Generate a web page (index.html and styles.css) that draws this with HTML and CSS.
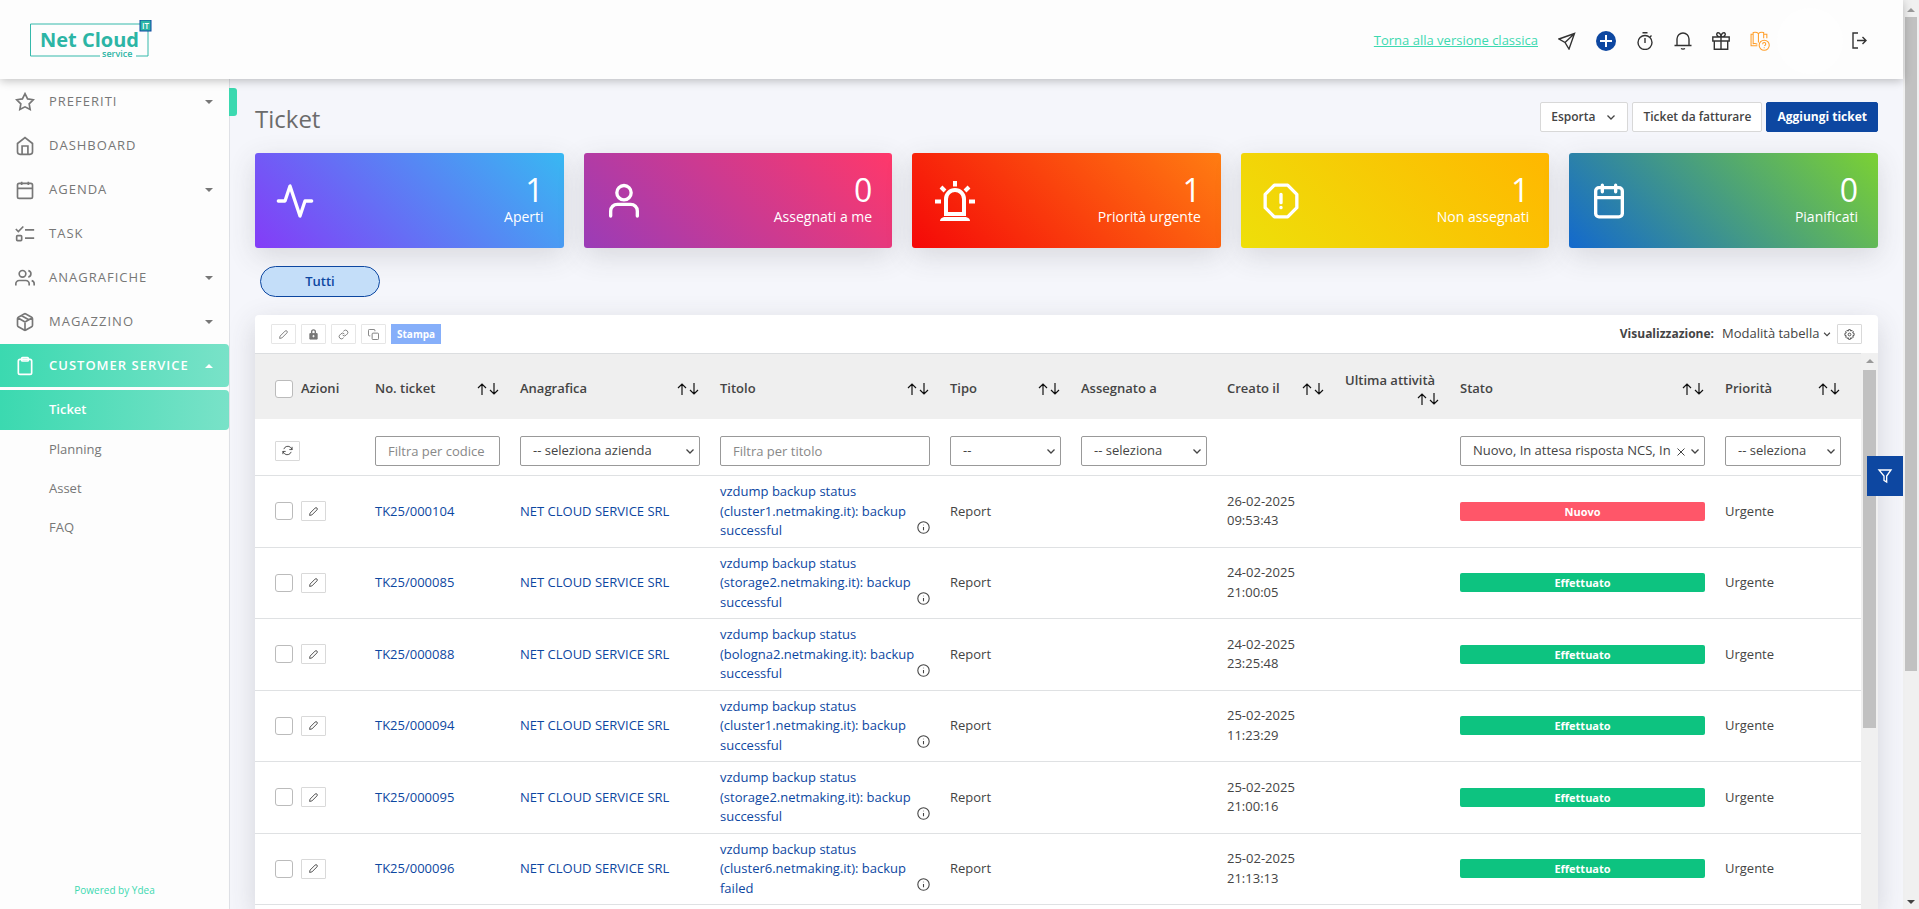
FILE: index.html
```
<!DOCTYPE html>
<html lang="it">
<head>
<meta charset="utf-8">
<title>Ticket</title>
<link rel="stylesheet" href="styles.css">
</head>
<body>
<svg class="sprite" aria-hidden="true">
  <symbol id="i-edit" viewBox="0 0 24 24"><path d="M15.500 4.500a2.500 2.500 0 0 1 4 4L8.500 19.500 3.500 20.500l1-5z"/></symbol>
  <symbol id="i-sort" viewBox="0 0 24 16"><path d="M6 14V3M2 7l4-4 4 4M18 2v11M14 9l4 4 4-4"/></symbol>
  <symbol id="i-info" viewBox="0 0 24 24"><circle cx="12" cy="12" r="10.500"/><path d="M12 11v6M12 7v1"/></symbol>
  <symbol id="i-down" viewBox="0 0 12 12"><path d="M2.500 4.500L6 8l3.500-3.500"/></symbol>
</svg>
<div class="shell">
  <header class="topbar">
    <a class="logo" href="#" aria-label="Net Cloud service IT">
      <svg width="122" height="40" viewBox="0 0 122 40">
        <path d="M110 4H.500v32H70M106 36h12V11" fill="none" stroke="#35b9ab"/>
        <rect x="110" y="0" width="11" height="11" fill="#2cb5a5"/>
        <text class="logo-it" x="112" y="9">IT</text>
        <text class="logo-name" x="10" y="27">Net Cloud</text>
        <text class="logo-sub" x="72" y="37">service</text>
      </svg>
    </a>
    <nav class="tools">
      <a class="classic" href="#">Torna alla versione classica</a>
      <button aria-label="Invia"><svg viewBox="0 0 18 18"><path d="M16.500 1.500L1 7l6 3.500L11 17zM16.500 1.500L7 10.500"/></svg></button>
      <button aria-label="Aggiungi"><svg class="plus" viewBox="0 0 20 20"><circle cx="10" cy="10" r="10" fill="#0d47a1" stroke="none"/><path d="M10 4v12M4 10h12" stroke="#fff" stroke-width="2"/></svg></button>
      <button aria-label="Timer"><svg viewBox="0 0 18 18"><circle cx="9" cy="10.500" r="7"/><path d="M6.500.800h5M9 6v5M14 5l1.500-1.500"/></svg></button>
      <button aria-label="Notifiche"><svg viewBox="0 0 18 18"><path d="M.500 13.500h17M3 13.500V7a6 6 0 0 1 12 0v6.500M7 16.500q2 1.200 4 0"/></svg></button>
      <button aria-label="Novità"><svg viewBox="0 0 18 18"><path d="M.800 5h16.400v4H.800zM2.300 9h13.400v8.200H2.300zM9 5v12M9 5C4 5 4 1 6 .800S9 3 9 5c0-2 1-4.400 3-4.200S14 5 9 5"/></svg></button>
      <button class="guide" aria-label="Guida"><svg viewBox="0 0 19 19"><path d="M7 12.500C5 11.500 4.500 12 3 12V1.500c2-.5 3.500-.5 5 1 1.500-1.500 3-1.500 5-1V7M8 2.500V11M3 3H1v11h6M13 3h3v4"/><circle cx="13.500" cy="13.500" r="4.800"/><path d="M12 12.500q0-1.500 1.500-1.500t1.500 1.400-1.500 1.600M13.500 15.500v1"/></svg></button>
      <span class="avatar"></span>
      <button aria-label="Esci"><svg viewBox="0 0 18 18"><path d="M8 1H3v15h5M7 8.500h9M12.500 5L16 8.500 12.500 12"/></svg></button>
    </nav>
  </header>

  <div class="body">
    <aside class="side">
      <nav class="menu">
        <a class="item" href="#"><svg viewBox="0 0 24 24"><path d="M12 2l3.100 6.300 6.900 1-5 4.900 1.200 6.800-6.200-3.200L5.800 21 7 14.200 2 9.300l6.900-1z"/></svg>PREFERITI<i class="caret"></i></a>
        <a class="item" href="#"><svg viewBox="0 0 24 24"><path d="M3 9l9-7 9 7v10a3 3 0 0 1-3 3H6a3 3 0 0 1-3-3zM8.500 22V12h7v10"/></svg>DASHBOARD</a>
        <a class="item" href="#"><svg viewBox="0 0 24 24"><rect x="3" y="4" width="18" height="18" rx="2"/><path d="M16 2v4M8 2v4M3 10h18"/></svg>AGENDA<i class="caret"></i></a>
        <a class="item" href="#"><svg viewBox="0 0 24 24"><path d="M12 7h11M12 17h11M1 6l3 3 6-6"/><rect x="2" y="14" width="6" height="6" rx="1"/></svg>TASK</a>
        <a class="item" href="#"><svg viewBox="0 0 24 24"><path d="M17 21v-2a4 4 0 0 0-4-4H5a4 4 0 0 0-4 4v2M23 21v-2a4 4 0 0 0-3-3.900M16 3.100a4 4 0 0 1 0 7.800"/><circle cx="9" cy="7" r="4"/></svg>ANAGRAFICHE<i class="caret"></i></a>
        <a class="item" href="#"><svg viewBox="0 0 24 24"><path d="M21 16V8a2 2 0 0 0-1-1.700l-7-4a2 2 0 0 0-2 0l-7 4A2 2 0 0 0 3 8v8a2 2 0 0 0 1 1.700l7 4a2 2 0 0 0 2 0l7-4a2 2 0 0 0 1-1.700zM3.300 7l8.700 5 8.700-5M12 22V12M7.500 4.200l9 5.200"/></svg>MAGAZZINO<i class="caret"></i></a>
        <a class="item on" href="#"><svg viewBox="0 0 24 24"><rect x="4" y="4" width="16" height="18" rx="2"/><rect x="8" y="2" width="8" height="4" rx="1"/></svg>CUSTOMER SERVICE<i class="caret up"></i></a>
      </nav>
      <nav class="submenu">
        <a class="sub on" href="#">Ticket</a>
        <a class="sub" href="#">Planning</a>
        <a class="sub" href="#">Asset</a>
        <a class="sub" href="#">FAQ</a>
      </nav>
      <a class="powered" href="#">Powered by Ydea</a>
      <button class="side-tab" aria-label="Riduci menu"></button>
    </aside>

    <main class="main">
      <div class="title-row">
        <h1>Ticket</h1>
        <button class="btn">Esporta <svg class="chev"><use href="#i-down"/></svg></button>
        <button class="btn">Ticket da fatturare</button>
        <button class="btn primary">Aggiungi ticket</button>
      </div>

      <section class="cards">
        <a class="card c1" href="#"><svg viewBox="0 0 24 24"><path d="M22 12h-4l-3 9L9 3l-3 9H2"/></svg><span><strong>1</strong>Aperti</span></a>
        <a class="card c2" href="#"><svg viewBox="0 0 24 24"><path d="M20 21v-3a4 4 0 0 0-4-4H8a4 4 0 0 0-4 4v3"/><circle cx="12" cy="7" r="4.300"/></svg><span><strong>0</strong>Assegnati a me</span></a>
        <a class="card c3" href="#"><svg class="siren" viewBox="0 0 40 40"><path d="M11 33V18a9 9 0 0 1 18 0V33z"/><path d="M0 20.500h6M34 20.500h6M20 0v5.500M6 6l4 4M34 6l-4 4"/><path class="fill" d="M9 36h22q4 1 4 4H5q0-3 4-4z"/></svg><span><strong>1</strong>Priorità urgente</span></a>
        <a class="card c4" href="#"><svg viewBox="0 0 24 24"><path d="M8 2.500h8L21.500 8v8L16 21.500H8L2.500 16V8zM12 8v5M12 15.800v.2"/></svg><span><strong>1</strong>Non assegnati</span></a>
        <a class="card c5" href="#"><svg viewBox="0 0 24 24"><rect x="4" y="4" width="16" height="17.500" rx="2"/><path d="M16 2.500v4M8 2.500v4M4 10h16"/></svg><span><strong>0</strong>Pianificati</span></a>
      </section>

      <div class="filters"><button class="pill">Tutti</button></div>

      <section class="panel">
        <div class="toolbar">
          <button class="mini dim" aria-label="Modifica"><svg><use href="#i-edit"/></svg></button>
          <button class="mini dim" aria-label="Blocca"><svg viewBox="0 0 24 24"><path d="M4 10h16v12H4z" fill="currentColor"/><path d="M8 10V6a4 4 0 0 1 8 0v4" stroke-width="3"/><circle cx="12" cy="15.500" r="1.500" fill="#fff" stroke="#fff"/></svg></button>
          <button class="mini dim" aria-label="Collega"><svg viewBox="0 0 24 24"><path d="M10 13a5 5 0 0 0 7.500.5l3-3a5 5 0 0 0-7-7L11.700 5M14 11a5 5 0 0 0-7.500-.5l-3 3a5 5 0 0 0 7 7l1.800-1.700"/></svg></button>
          <button class="mini dim" aria-label="Copia"><svg viewBox="0 0 24 24"><rect x="9" y="9" width="14" height="14" rx="2"/><path d="M5 15H3a2 2 0 0 1-2-2V3a2 2 0 0 1 2-2h10a2 2 0 0 1 2 2v2"/></svg></button>
          <button class="print">Stampa</button>
          <label class="view-label" for="view">Visualizzazione:</label>
          <span class="view"><select id="view"><option>Modalità tabella</option></select><svg class="chev"><use href="#i-down"/></svg></span>
          <button class="mini" aria-label="Impostazioni"><svg viewBox="0 0 24 24"><circle cx="12" cy="12" r="3"/><path d="M10 1.500h4l.8 3 2.700-1.500 2.900 2.900-1.500 2.700 3.100.9v4.500l-3.100.9 1.500 2.700-2.900 2.900-2.700-1.500-.8 3.500h-4l-.8-3.500L6.500 20.500l-2.900-2.900 1.500-2.700-3.100-.9V9.500l3.100-.9-1.500-2.700L6.500 3l2.700 1.500z"/></svg></button>
        </div>
        <div class="grid-wrap">
          <table class="grid">
            <colgroup><col class="w-act"><col class="w-num"><col class="w-ana"><col class="w-tit"><col class="w-tipo"><col class="w-ass"><col class="w-cre"><col class="w-ult"><col class="w-sta"><col class="w-pri"></colgroup>
            <thead>
              <tr class="head">
                <th><div class="acts"><input type="checkbox" aria-label="Seleziona tutti"> Azioni</div></th>
                <th><div class="th">No. ticket <svg><use href="#i-sort"/></svg></div></th>
                <th><div class="th">Anagrafica <svg><use href="#i-sort"/></svg></div></th>
                <th><div class="th">Titolo <svg><use href="#i-sort"/></svg></div></th>
                <th><div class="th">Tipo <svg><use href="#i-sort"/></svg></div></th>
                <th><div class="th">Assegnato a</div></th>
                <th><div class="th">Creato il <svg><use href="#i-sort"/></svg></div></th>
                <th><div class="th stack">Ultima attività <svg><use href="#i-sort"/></svg></div></th>
                <th><div class="th">Stato <svg><use href="#i-sort"/></svg></div></th>
                <th><div class="th">Priorità <svg><use href="#i-sort"/></svg></div></th>
              </tr>
              <tr class="search">
                <td><div class="acts"><button class="mini" aria-label="Ricarica"><svg viewBox="0 0 24 24"><path d="M22 4v6h-6M2 20v-6h6M4 9a9 9 0 0 1 15-3.500L22.500 10M1.500 14L5 18.500A9 9 0 0 0 20 15"/></svg></button></div></td>
                <td><input class="field" type="text" placeholder="Filtra per codice" aria-label="No. ticket"></td>
                <td><span class="pick"><select class="field" aria-label="Anagrafica"><option>-- seleziona azienda</option></select><svg class="chev"><use href="#i-down"/></svg></span></td>
                <td><input class="field" type="text" placeholder="Filtra per titolo" aria-label="Titolo"></td>
                <td><span class="pick"><select class="field" aria-label="Tipo"><option>--</option></select><svg class="chev"><use href="#i-down"/></svg></span></td>
                <td><span class="pick"><select class="field" aria-label="Assegnato a"><option>-- seleziona</option></select><svg class="chev"><use href="#i-down"/></svg></span></td>
                <td></td>
                <td></td>
                <td><span class="pick multi"><select class="field" aria-label="Stato"><option>Nuovo, In attesa risposta NCS, In</option></select><svg class="clear" viewBox="0 0 12 12"><path d="M2.500 2.500l7 7M9.500 2.500l-7 7"/></svg><svg class="chev"><use href="#i-down"/></svg></span></td>
                <td><span class="pick"><select class="field" aria-label="Priorità"><option>-- seleziona</option></select><svg class="chev"><use href="#i-down"/></svg></span></td>
              </tr>
            </thead>
            <tbody>
              <tr>
                <td><div class="acts"><input type="checkbox" aria-label="Seleziona TK25/000104"><button class="mini" aria-label="Modifica"><svg><use href="#i-edit"/></svg></button></div></td>
                <td><a href="#">TK25/000104</a></td><td><a href="#">NET CLOUD SERVICE SRL</a></td>
                <td><div class="subject"><a href="#">vzdump backup status (cluster1.netmaking.it): backup successful</a><svg><use href="#i-info"/></svg></div></td>
                <td>Report</td><td></td><td>26-02-2025 09:53:43</td><td></td>
                <td><span class="badge new">Nuovo</span></td><td>Urgente</td>
              </tr>
              <tr>
                <td><div class="acts"><input type="checkbox" aria-label="Seleziona TK25/000085"><button class="mini" aria-label="Modifica"><svg><use href="#i-edit"/></svg></button></div></td>
                <td><a href="#">TK25/000085</a></td><td><a href="#">NET CLOUD SERVICE SRL</a></td>
                <td><div class="subject"><a href="#">vzdump backup status (storage2.netmaking.it): backup successful</a><svg><use href="#i-info"/></svg></div></td>
                <td>Report</td><td></td><td>24-02-2025 21:00:05</td><td></td>
                <td><span class="badge">Effettuato</span></td><td>Urgente</td>
              </tr>
              <tr>
                <td><div class="acts"><input type="checkbox" aria-label="Seleziona TK25/000088"><button class="mini" aria-label="Modifica"><svg><use href="#i-edit"/></svg></button></div></td>
                <td><a href="#">TK25/000088</a></td><td><a href="#">NET CLOUD SERVICE SRL</a></td>
                <td><div class="subject"><a href="#">vzdump backup status (bologna2.netmaking.it): backup successful</a><svg><use href="#i-info"/></svg></div></td>
                <td>Report</td><td></td><td>24-02-2025 23:25:48</td><td></td>
                <td><span class="badge">Effettuato</span></td><td>Urgente</td>
              </tr>
              <tr>
                <td><div class="acts"><input type="checkbox" aria-label="Seleziona TK25/000094"><button class="mini" aria-label="Modifica"><svg><use href="#i-edit"/></svg></button></div></td>
                <td><a href="#">TK25/000094</a></td><td><a href="#">NET CLOUD SERVICE SRL</a></td>
                <td><div class="subject"><a href="#">vzdump backup status (cluster1.netmaking.it): backup successful</a><svg><use href="#i-info"/></svg></div></td>
                <td>Report</td><td></td><td>25-02-2025 11:23:29</td><td></td>
                <td><span class="badge">Effettuato</span></td><td>Urgente</td>
              </tr>
              <tr>
                <td><div class="acts"><input type="checkbox" aria-label="Seleziona TK25/000095"><button class="mini" aria-label="Modifica"><svg><use href="#i-edit"/></svg></button></div></td>
                <td><a href="#">TK25/000095</a></td><td><a href="#">NET CLOUD SERVICE SRL</a></td>
                <td><div class="subject"><a href="#">vzdump backup status (storage2.netmaking.it): backup successful</a><svg><use href="#i-info"/></svg></div></td>
                <td>Report</td><td></td><td>25-02-2025 21:00:16</td><td></td>
                <td><span class="badge">Effettuato</span></td><td>Urgente</td>
              </tr>
              <tr>
                <td><div class="acts"><input type="checkbox" aria-label="Seleziona TK25/000096"><button class="mini" aria-label="Modifica"><svg><use href="#i-edit"/></svg></button></div></td>
                <td><a href="#">TK25/000096</a></td><td><a href="#">NET CLOUD SERVICE SRL</a></td>
                <td><div class="subject"><a href="#">vzdump backup status (cluster6.netmaking.it): backup failed</a><svg><use href="#i-info"/></svg></div></td>
                <td>Report</td><td></td><td>25-02-2025 21:13:13</td><td></td>
                <td><span class="badge">Effettuato</span></td><td>Urgente</td>
              </tr>
            </tbody>
          </table>
          <div class="bar inner"><i class="arrow up"></i><span class="thumb"></span></div>
        </div>
      </section>
      <button class="funnel" aria-label="Filtri"><svg viewBox="0 0 24 24"><path d="M3 3h18L14.500 12v9l-4-2.500V12z"/></svg></button>
    </main>
  </div>
</div>
<div class="bar outer"><i class="arrow up"></i><span class="thumb"></span><i class="arrow down"></i></div>
</body>
</html>
```
FILE: styles.css
```
* { box-sizing: border-box; }

body {
  margin: 0;
  display: flex;
  height: 100vh;
  overflow: hidden;
  font: 13px/1.5 "Open Sans", "Noto Sans", sans-serif;
  color: #444;
  background: #f5f6fb;
}

.sprite { position: absolute; width: 0; height: 0; }

svg { fill: none; stroke: currentColor; stroke-width: 2; flex: none; }
a { color: #0d47a1; text-decoration: none; }
button, input, select { font: inherit; color: inherit; }
button { margin: 0; padding: 0; border: 0; background: none; }

.shell { flex: 1; min-width: 0; display: flex; flex-direction: column; }

/* Top bar */
.topbar {
  position: relative;
  z-index: 2;
  display: flex;
  align-items: center;
  justify-content: space-between;
  height: 79px;
  flex: none;
  padding: 0 35px 0 30px;
  background: #fdfdfd;
  box-shadow: 0 2px 9px rgba(0, 0, 0, .24);
}
.logo svg { display: block; stroke-width: 1; }
.logo text { stroke: none; fill: #2cb5a5; }
.logo .logo-name { font: 700 20px "Open Sans", sans-serif; }
.logo .logo-sub { font: 600 9px "Open Sans", sans-serif; }
.logo .logo-it { font: 600 8px "Open Sans", sans-serif; fill: #fff; }
.tools { display: flex; align-items: center; gap: 20px; color: #333; padding-top: 3px; }
.tools svg { display: block; width: 18px; height: 18px; stroke-width: 1.4; }
.tools .plus { width: 20px; height: 20px; }
.tools .guide { color: #ff9f2b; }
.tools .guide svg { width: 20px; height: 20px; stroke-width: 1; }
.classic { color: #3cd9b0; text-decoration: underline; }
.avatar { width: 66px; height: 66px; margin: 0 -13px; border-radius: 50%; background: #fefefe; }

.body { flex: 1; min-height: 0; display: flex; }

/* Sidebar */
.side {
  position: relative;
  display: flex;
  flex-direction: column;
  width: 230px;
  flex: none;
  padding-top: 1px;
  background: #fdfdfd;
  border-right: 1px solid #dfe1e6;
}
.item {
  display: flex;
  align-items: center;
  height: 43px;
  margin-bottom: 1px;
  padding: 0 16px 0 15px;
  color: #777;
  letter-spacing: 1px;
}
.item svg { width: 20px; height: 20px; margin-right: 14px; }
.item.on, .sub.on {
  color: #fff;
  font-weight: 600;
  background: linear-gradient(90deg, #3bd9b0, #79e2c8);
  border-radius: 0 4px 4px 0;
}
.caret { margin-left: auto; border: 4px solid transparent; border-top-color: currentColor; border-bottom: 0; }
.caret.up { border-top: 0; border-bottom: 4px solid currentColor; }
.submenu { margin-top: 2px; }
.sub { display: flex; align-items: center; height: 39px; padding-left: 49px; color: #777; }
.sub.on { height: 40px; }
.powered { margin: auto 0 11px; text-align: center; font-size: 10px; color: #3cd9b0; }
.side-tab {
  position: absolute;
  left: 100%;
  top: 9px;
  width: 8px;
  height: 28px;
  background: #3bd9b0;
  border-radius: 0 3px 3px 0;
}

/* Main column */
.main {
  position: relative;
  flex: 1;
  min-width: 0;
  display: flex;
  flex-direction: column;
  padding: 23px 25px 0;
}
.title-row { display: flex; gap: 4px; height: 30px; align-items: center; }
h1 { margin: 0 auto 0 0; padding-top: 3px; font-size: 24px; font-weight: 400; color: #6b6b6b; }
.btn {
  height: 30px;
  padding: 0 10px;
  display: flex;
  align-items: center;
  gap: 10px;
  background: #fff;
  border: 1px solid #d8d8d8;
  border-radius: 2px;
  font-size: 12px;
  font-weight: 600;
}
.btn.primary { background: #0d47a1; border-color: #0d47a1; color: #fff; font-weight: 700; }
.chev { width: 12px; height: 12px; stroke-width: 1.3; }

.cards { display: grid; grid-template-columns: repeat(5, 1fr); gap: 20px; margin-top: 21px; }
.card {
  display: flex;
  align-items: center;
  justify-content: space-between;
  height: 95px;
  padding: 0 20px;
  color: #fff;
  border-radius: 3px;
  box-shadow: 0 8px 28px rgba(60, 60, 70, .16);
}
.card svg { width: 40px; height: 40px; stroke-linecap: round; stroke-linejoin: round; }
.card .siren { margin-left: 3px; stroke-width: 4; stroke-linecap: butt; stroke-linejoin: miter; }
.siren .fill { fill: #fff; stroke: none; }
.card span { display: flex; flex-direction: column; text-align: right; font-size: 14px; line-height: 22px; font-weight: 500; }
.card strong { font-size: 32px; line-height: 33px; font-weight: 400; }
.c1 { background: linear-gradient(45deg, #843cf7, #38b8f2); }
.c2 { background: linear-gradient(45deg, #9a3cb7, #ff386a); }
.c3 { background: linear-gradient(45deg, #f50808, #ff7d12); }
.c4 { background: linear-gradient(45deg, #eedf0a, #ffb700); }
.c5 { background: linear-gradient(45deg, #1369cd, #7bd133); }

.filters { margin: 18px 5px; }
.pill {
  display: block;
  width: 120px;
  height: 31px;
  border: 1px solid #0d47a1;
  border-radius: 16px;
  background: #c4def9;
  color: #0d47a1;
  font-weight: 600;
}

/* Table panel */
.panel {
  flex: 1;
  min-height: 0;
  display: flex;
  flex-direction: column;
  background: #fff;
  border-radius: 4px 4px 0 0;
  box-shadow: 0 8px 28px rgba(60, 60, 70, .18);
}
.toolbar { display: flex; align-items: center; gap: 5px; height: 38px; flex: none; padding: 0 16px; }
.mini {
  display: grid;
  place-items: center;
  width: 25px;
  height: 20px;
  border: 1px solid #d9d9d9;
  border-radius: 1px;
  background: #fff;
}
.mini svg { width: 11px; height: 11px; }
.mini.dim { color: #777; border-color: #e6e6e6; }
.print { height: 20px; padding: 0 6px; background: #86affa; color: #fff; font-size: 10px; font-weight: 700; }
.view-label { margin-left: auto; font-size: 12px; font-weight: 700; }
.view { position: relative; }
.view select { appearance: none; border: 0; padding: 0 12px 0 3px; background: none; display: block; }
.view .chev { position: absolute; right: 0; top: 4px; width: 10px; pointer-events: none; }

.grid-wrap { display: flex; flex: 1; min-height: 0; overflow: hidden; align-items: stretch; }
.grid { flex: 1; width: 100%; height: max-content; border-collapse: collapse; table-layout: fixed; }
.w-act { width: 110px; } .w-num { width: 145px; } .w-ana { width: 200px; } .w-tit { width: 230px; }
.w-tipo { width: 131px; } .w-ass { width: 146px; } .w-cre { width: 118px; } .w-ult { width: 115px; }
.w-sta { width: 265px; } .w-pri { width: 146px; }
.grid th, .grid td { padding: 6px 10px; text-align: left; vertical-align: middle; border-bottom: 1px solid #dfe1e3; }
.grid .head th { height: 65px; padding-top: 11px; background: #efefef; font-weight: 600; border-top: 1px solid #dcdee0; border-bottom: 0; }
.grid .search td { height: 57px; padding: 8px 10px 0; }
.grid tr > :last-child, .grid .search td:last-child { padding-right: 20px; }
.th { display: flex; align-items: center; justify-content: space-between; }
.th svg { width: 24px; height: 16px; stroke-width: 1.2; color: #111; }
.th.stack { display: block; white-space: nowrap; }
.th.stack svg { display: block; margin-left: auto; }
.acts { display: flex; align-items: center; gap: 8px; padding-left: 10px; }
input[type="checkbox"] {
  appearance: none;
  width: 18px;
  height: 18px;
  margin: 0;
  border: 1px solid #bbb;
  border-radius: 3px;
  background: #fff;
}
.field {
  display: block;
  width: 100%;
  height: 30px;
  padding: 0 12px;
  border: 1px solid #999;
  border-radius: 2px;
  background: #fff;
  appearance: none;
}
.field::placeholder { color: #888; }
.pick { display: block; position: relative; }
.pick .chev { position: absolute; right: 4px; top: 9px; pointer-events: none; }
.pick .clear { position: absolute; right: 18px; top: 10px; width: 12px; height: 12px; stroke-width: 1; }
.multi .field { padding-right: 30px; }
.subject { display: flex; justify-content: space-between; align-items: flex-end; }
.subject svg { width: 13px; height: 13px; margin-bottom: 7px; }
.badge {
  display: block;
  height: 19px;
  line-height: 20px;
  border-radius: 2px;
  background: #0dc380;
  color: #fff;
  font-size: 11px;
  font-weight: 700;
  text-align: center;
}
.badge.new { background: #ff5669; }

/* Scroll bars */
.bar { display: flex; flex-direction: column; align-items: center; flex: none; background: #f0f0f0; }
.bar .thumb { background: #c1c1c1; }
.arrow { border: 4px solid transparent; }
.arrow.up { border-top: 0; border-bottom-color: #999; }
.arrow.down { border-bottom: 0; border-top-color: #444; margin-top: auto; }
.inner { width: 17px; padding-top: 6px; }
.inner .thumb { width: 13px; height: 65%; margin-top: 7px; }
.outer { width: 16px; padding: 8px 0 5px; }
.outer .thumb { width: 12px; height: 73%; margin-top: 5px; }

.funnel {
  position: absolute;
  right: 0;
  top: 377px;
  width: 36px;
  height: 40px;
  display: grid;
  place-items: center;
  background: #0d47a1;
  color: #fff;
}
.funnel svg { width: 16px; height: 16px; }
```
